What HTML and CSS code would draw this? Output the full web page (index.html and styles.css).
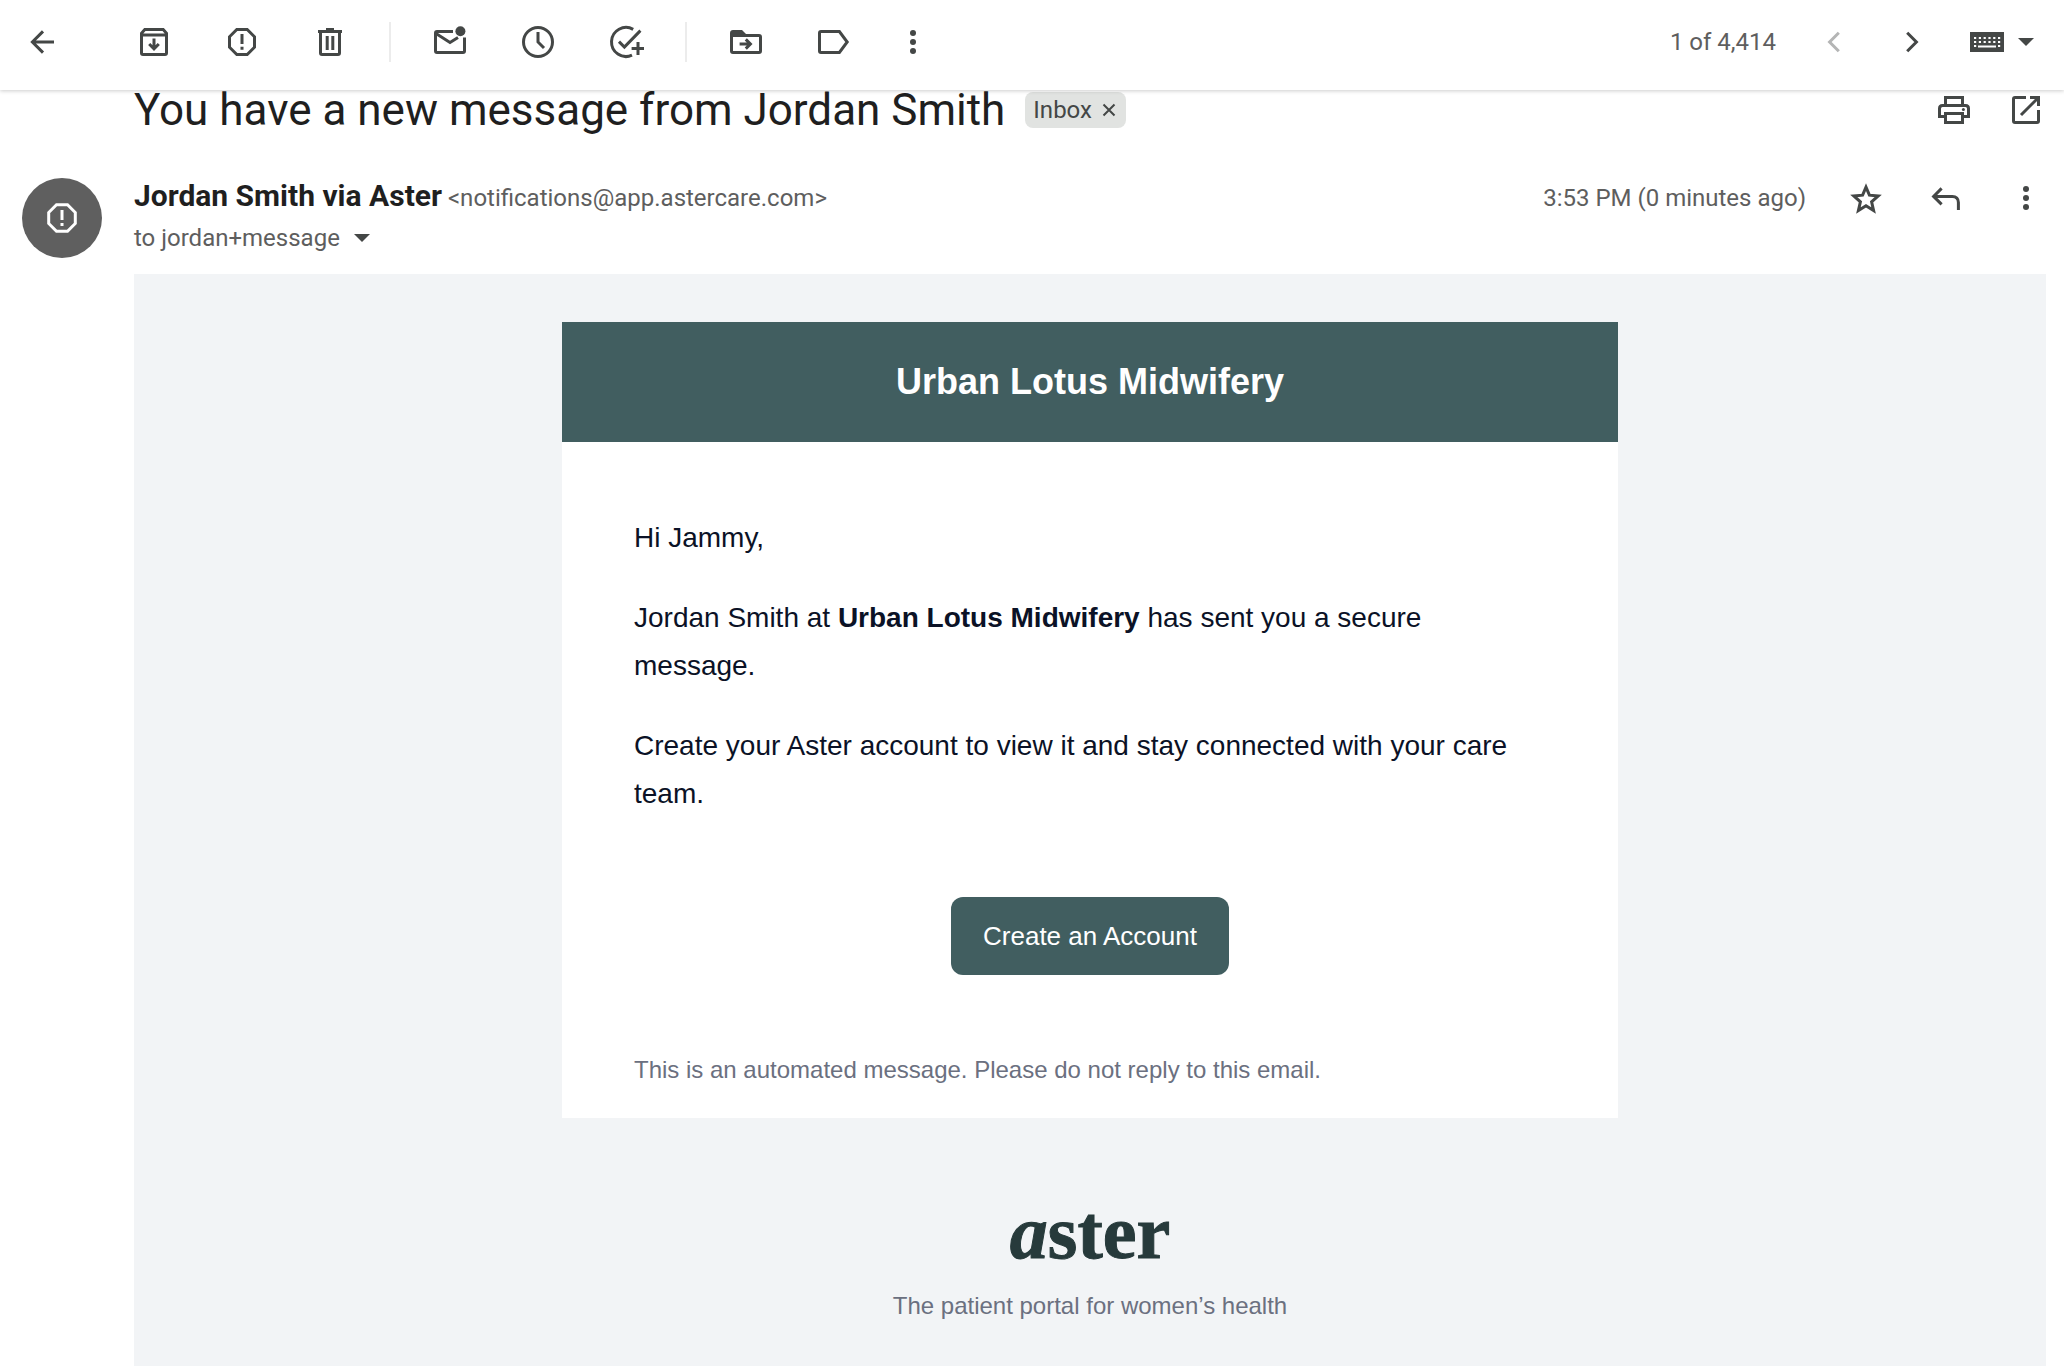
FILE: index.html
```html
<!DOCTYPE html>
<html lang="en">
<head>
    <meta charset="UTF-8">
    <meta name="viewport" content="width=device-width, initial-scale=1.0">
    <title>You have a new message from Jordan Smith</title>
    <link rel="stylesheet" href="styles.css">
</head>
<body>
    <header class="toolbar">
        <button class="icon-btn back" aria-label="Back to inbox">
            <svg class="icon" viewBox="0 0 20 20"><path d="M16 10H5M10.5 4.7L5.2 10l5.3 5.3"/></svg>
        </button>
        <div class="group">
            <button class="icon-btn" aria-label="Archive">
                <svg class="icon" viewBox="0 0 20 20"><path d="M3.75 5.6v9.9c0 .4.3.75.75.75h11c.4 0 .75-.35.75-.75V5.6L14.6 3.75H5.4zM3.75 6.5h12.5M10 8.2v4.8M7.6 11l2.4 2.4 2.4-2.4"/></svg>
            </button>
            <button class="icon-btn" aria-label="Report spam">
                <svg class="icon" viewBox="0 0 20 20"><path d="M7.4 3.75h5.2l3.65 3.65v5.2l-3.65 3.65H7.4L3.75 12.6V7.4zM10 6v5M10 12.4v1.5"/></svg>
            </button>
            <button class="icon-btn" aria-label="Delete">
                <svg class="icon" viewBox="0 0 20 20"><path d="M4 4.75h12M8 3.75h4M5.25 5v10.5c0 .4.3.75.75.75h8c.4 0 .75-.35.75-.75V5M8.6 7v7M11.4 7v7"/></svg>
            </button>
        </div>
        <span class="divider"></span>
        <div class="group">
            <button class="icon-btn" aria-label="Mark as unread">
                <svg class="icon" viewBox="0 0 20 20"><path d="M11.5 4.75H3.5c-.4 0-.75.3-.75.75v9c0 .4.3.75.75.75h13c.4 0 .75-.35.75-.75V7.8M3 5.8l7 4.4 4-2.5"/><circle class="solid" cx="15.2" cy="4.6" r="2.5"/></svg>
            </button>
            <button class="icon-btn" aria-label="Snooze">
                <svg class="icon" viewBox="0 0 20 20"><circle cx="10" cy="10" r="7.25"/><path d="M10 5v5l3 3"/></svg>
            </button>
            <button class="icon-btn" aria-label="Add to tasks">
                <svg class="icon" viewBox="0 0 20 20"><path d="M13.6 3.7A7.25 7.25 0 1 0 13 16.6M6.5 9.8l2.7 2.7 8-8.2M16 10v6.5M12.8 13.25h6.2"/></svg>
            </button>
        </div>
        <span class="divider"></span>
        <div class="group">
            <button class="icon-btn" aria-label="Move to">
                <svg class="icon" viewBox="0 0 20 20"><path d="M2.75 6.75v7.75c0 .4.3.75.75.75h13c.4 0 .75-.35.75-.75v-7c0-.4-.3-.75-.75-.75zM6.8 11H12M9.9 8.7l2.3 2.3-2.3 2.3"/><path class="solid" d="M2 7.3V5.5C2 4.6 2.6 4 3.5 4H8l2 2v1.3z"/></svg>
            </button>
            <button class="icon-btn" aria-label="Labels">
                <svg class="icon" viewBox="0 0 20 20"><path d="M3.5 4.75h9.2L16.6 10l-3.9 5.25H3.5c-.4 0-.75-.35-.75-.75v-9c0-.45.35-.75.75-.75z"/></svg>
            </button>
        </div>
        <button class="icon-btn" aria-label="More options">
            <svg class="icon" viewBox="0 0 20 20"><g class="solid"><circle cx="10" cy="5.5" r="1.5"/><circle cx="10" cy="10" r="1.5"/><circle cx="10" cy="14.5" r="1.5"/></g></svg>
        </button>

        <div class="pager">
            <span class="count">1 of 4,414</span>
            <button class="icon-btn" aria-label="Newer" disabled>
                <svg class="icon" viewBox="0 0 20 20"><path d="M12.4 5.4L7.8 10l4.6 4.6"/></svg>
            </button>
            <button class="icon-btn" aria-label="Older">
                <svg class="icon" viewBox="0 0 20 20"><path d="M7.6 5.4l4.6 4.6-4.6 4.6"/></svg>
            </button>
            <button class="input-tools" aria-label="Select input tool">
                <svg class="keyboard" viewBox="0 0 34 20">
                    <path class="solid" d="M0 0h34v20H0z"/>
                    <path class="keys" d="M4 6h27M4 10h27M4 14h2.2M28 14h2.2"/>
                    <path class="space-bar" d="M8 14.5h18"/>
                </svg>
                <svg class="caret" viewBox="0 0 16 8"><path class="solid" d="M0 0h16L8 8z"/></svg>
            </button>
        </div>
    </header>

    <main>
        <div class="subject-row">
            <h1>You have a new message from Jordan Smith</h1>
            <span class="chip">Inbox
                <button aria-label="Remove label Inbox"><svg viewBox="0 0 14 14"><path d="M1.5 1.5l11 11M12.5 1.5l-11 11"/></svg></button>
            </span>
            <div class="subject-actions">
                <button class="icon-btn" aria-label="Print all">
                    <svg class="icon" viewBox="0 0 20 20"><path d="M5.75 7.5V3.75h8.5V7.5M5 13.25H2.75v-4c0-.9.6-1.5 1.5-1.5h11.5c.9 0 1.5.6 1.5 1.5v4H15M5.75 11.75h8.5v4.5h-8.5z"/><circle class="solid" cx="14.7" cy="9.8" r=".75"/></svg>
                </button>
                <button class="icon-btn" aria-label="Open in new window">
                    <svg class="icon" viewBox="0 0 20 20"><path d="M10 3.75H4.5c-.4 0-.75.3-.75.75v11c0 .4.3.75.75.75h11c.4 0 .75-.35.75-.75V10M12 3.75h4.25V8M16 4l-8.5 8.5"/></svg>
                </button>
            </div>
        </div>

        <div class="sender-row">
            <div class="avatar">
                <svg viewBox="0 0 30 30"><path d="M9.5 1.7h11l7.8 7.8v11l-7.8 7.8h-11L1.7 20.5v-11zM15 7v10M15 20v3"/></svg>
            </div>
            <div class="sender">
                <div class="from"><strong>Jordan Smith via Aster</strong> <span>&lt;notifications@app.astercare.com&gt;</span></div>
                <div class="to">to jordan+message
                    <button aria-label="Show details"><svg class="caret" viewBox="0 0 16 8"><path class="solid" d="M0 0h16L8 8z"/></svg></button>
                </div>
            </div>
            <div class="sender-actions">
                <span class="time">3:53 PM (0 minutes ago)</span>
                <div class="sender-icons">
                    <button class="icon-btn" aria-label="Star">
                        <svg class="icon" viewBox="0 0 20 20"><path d="M10 4.6l1.7 4 4.4.4-3.3 2.9 1 4.4-3.8-2.4-3.8 2.4 1-4.4-3.3-2.9 4.4-.4z"/></svg>
                    </button>
                    <button class="icon-btn" aria-label="Reply">
                        <svg class="icon" viewBox="0 0 20 20"><path d="M7.8 5.2L3.8 9.2l4 4M4 9.2h9.2c1.9 0 3 1.2 3 3V16"/></svg>
                    </button>
                    <button class="icon-btn" aria-label="More">
                        <svg class="icon" viewBox="0 0 20 20"><g class="solid"><circle cx="10" cy="5.5" r="1.5"/><circle cx="10" cy="10" r="1.5"/><circle cx="10" cy="14.5" r="1.5"/></g></svg>
                    </button>
                </div>
            </div>
        </div>

        <article class="email">
            <div class="card">
                <h2>Urban Lotus Midwifery</h2>
                <div class="card-body">
                    <p>Hi Jammy,</p>
                    <p>Jordan Smith at <strong>Urban Lotus Midwifery</strong> has sent you a secure message.</p>
                    <p>Create your Aster account to view it and stay connected with your care team.</p>
                    <a class="cta" href="#">Create an Account</a>
                    <p class="note">This is an automated message. Please do not reply to this email.</p>
                </div>
            </div>
            <footer>
                <div class="logo"><i>a</i>ster</div>
                <p>The patient portal for women’s health</p>
            </footer>
        </article>
    </main>
</body>
</html>
```
FILE: styles.css
```css
* {
    box-sizing: border-box;
    margin: 0;
    padding: 0;
}

body {
    display: flex;
    flex-direction: column;
    min-height: 100vh;
    background: #fff;
    color: #5e5e5e;
    font-family: Roboto, sans-serif;
    font-size: 24px;
}

button {
    border: none;
    background: none;
    font: inherit;
    color: inherit;
    cursor: pointer;
}

svg {
    display: block;
    fill: none;
    stroke: currentColor;
}

.solid {
    fill: currentColor;
    stroke: none;
}

.icon-btn {
    width: 40px;
    height: 40px;
    flex: none;
    color: #444746;
}

.icon-btn:disabled {
    color: #b4b5b5;
}

.icon {
    width: 40px;
    height: 40px;
    stroke-width: 1.5;
}

.caret {
    width: 16px;
    height: 8px;
    color: #444746;
}

/* Top toolbar */
.toolbar {
    position: sticky;
    top: 0;
    z-index: 1;
    display: flex;
    align-items: center;
    gap: 39px;
    height: 90px;
    padding: 0 30px 6px 22px;
    background: #fff;
    box-shadow: 0 1px 4px rgba(0, 0, 0, 0.2);
}

.back {
    margin-right: 33px;
}

.group {
    display: flex;
    gap: 48px;
}

.divider {
    width: 2px;
    height: 40px;
    background: #ececec;
}

.pager {
    display: flex;
    align-items: center;
    gap: 38px;
    margin-left: auto;
}

.input-tools {
    display: flex;
    align-items: center;
    gap: 14px;
    color: #444746;
}

.keyboard {
    width: 34px;
    height: 20px;
}

.keys {
    stroke: #fff;
    stroke-width: 2;
    stroke-dasharray: 2.2 2.6;
}

.space-bar {
    stroke: #fff;
    stroke-width: 2;
}

main {
    flex: 1;
    display: flex;
    flex-direction: column;
    padding: 0 18px 0 22px;
}

/* Subject line */
.subject-row {
    display: flex;
    align-items: center;
    height: 40px;
    margin-bottom: 48px;
    padding-left: 112px;
}

h1 {
    color: #1f1f1f;
    font-size: 44px;
    font-weight: 400;
    line-height: 40px;
}

.chip {
    display: flex;
    align-items: center;
    gap: 10px;
    height: 36px;
    margin-left: 20px;
    padding: 0 10px 0 8px;
    border-radius: 8px;
    background: #e1e3e1;
    color: #444746;
}

.chip svg {
    width: 14px;
    height: 14px;
    stroke-width: 2;
}

.subject-actions {
    display: flex;
    gap: 32px;
    margin-left: auto;
}

/* Sender */
.sender-row {
    display: flex;
    margin-bottom: 16px;
    line-height: 40px;
}

.avatar {
    display: flex;
    align-items: center;
    justify-content: center;
    width: 80px;
    height: 80px;
    margin-right: 32px;
    border-radius: 50%;
    background: #5f5f5f;
    color: #fff;
}

.avatar svg {
    width: 30px;
    height: 30px;
    stroke-width: 3;
}

.from {
    height: 40px;
}

.from strong {
    color: #1f1f1f;
    font-size: 30px;
    line-height: 36px;
}

.to {
    display: flex;
    align-items: center;
    gap: 14px;
}

.sender-actions {
    display: flex;
    gap: 40px;
    margin-left: auto;
}

.sender-icons {
    display: flex;
    gap: 40px;
}

/* Message */
.email {
    flex: 1;
    margin-left: 112px;
    padding: 48px 24px;
    background: #f2f4f6;
    color: #6b7080;
    font-family: "Liberation Sans", Arial, sans-serif;
}

.card {
    max-width: 1056px;
    margin: 0 auto;
    background: #fff;
}

.card h2 {
    padding: 36px;
    background: #415e60;
    color: #fff;
    font-size: 36px;
    line-height: 48px;
    text-align: center;
}

.card-body {
    padding: 72px 72px 32px;
}

.card-body p {
    margin-bottom: 32px;
    color: #0b1226;
    font-size: 28px;
    line-height: 48px;
}

.cta {
    display: block;
    width: fit-content;
    margin: 79px auto;
    padding: 23px 32px;
    border-radius: 12px;
    background: #415e60;
    color: #fff;
    font-size: 26px;
    line-height: 32px;
    text-decoration: none;
}

.card-body .note {
    margin: 0;
    color: #6b7080;
    font-size: 24px;
    line-height: 32px;
}

footer {
    padding-top: 74px;
    text-align: center;
}

.logo {
    margin-bottom: 20px;
    color: #273a3b;
    font-family: "Liberation Serif", serif;
    font-size: 76px;
    font-weight: 700;
    line-height: 80px;
    -webkit-text-stroke: 1px #273a3b;
}
```
